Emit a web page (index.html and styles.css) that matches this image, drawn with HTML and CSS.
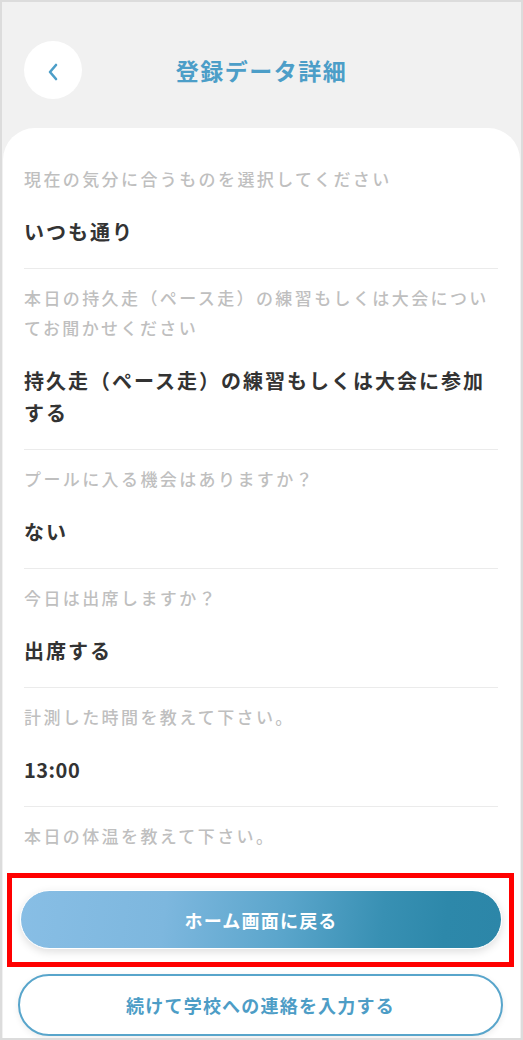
FILE: index.html
```html
<!DOCTYPE html>
<html lang="ja">
<head>
<meta charset="utf-8">
<title>登録データ詳細</title>
<link rel="stylesheet" href="styles.css">
</head>
<body>
<div class="screen">
  <header class="header">
    <button class="back" aria-label="戻る">
      <svg width="12" height="18" viewBox="0 0 12 18"><path d="M9 2 L3 9 L9 16" fill="none" stroke="#4c9ec8" stroke-width="2.6" stroke-linecap="round" stroke-linejoin="round"/></svg>
    </button>
    <h1 class="title">登録データ詳細</h1>
    <span class="spacer"></span>
  </header>
  <main class="card">
    <div class="list">
      <div class="item">
        <div class="label">現在の気分に合うものを選択してください</div>
        <div class="value">いつも通り</div>
      </div>
      <div class="item">
        <div class="label">本日の持久走（ペース走）の練習もしくは大会についてお聞かせください</div>
        <div class="value">持久走（ペース走）の練習もしくは大会に参加する</div>
      </div>
      <div class="item">
        <div class="label">プールに入る機会はありますか？</div>
        <div class="value">ない</div>
      </div>
      <div class="item">
        <div class="label">今日は出席しますか？</div>
        <div class="value">出席する</div>
      </div>
      <div class="item">
        <div class="label">計測した時間を教えて下さい。</div>
        <div class="value value-num">13:00</div>
      </div>
      <div class="item last">
        <div class="label">本日の体温を教えて下さい。</div>
      </div>
    </div>
    <div class="footer">
      <div class="highlight">
        <button class="btn-primary">ホーム画面に戻る</button>
      </div>
      <button class="btn-secondary">続けて学校への連絡を入力する</button>
    </div>
  </main>
</div>
</body>
</html>
```
FILE: styles.css
```css
html, body {
  margin: 0;
  padding: 0;
  background: #ffffff;
}

body {
  font-family: "Noto Sans CJK JP", "Noto Sans", sans-serif;
}

.screen {
  width: 523px;
  height: 1040px;
  box-sizing: border-box;
  border: 2px solid #dcdcdc;
  background: #f1f1f1;
  display: flex;
  flex-direction: column;
  overflow: hidden;
}

.header {
  display: grid;
  grid-template-columns: 58px 1fr 58px;
  align-items: center;
  padding: 39px 22px 29px;
}

.back {
  width: 58px;
  height: 58px;
  border-radius: 50%;
  border: none;
  background: #ffffff;
  padding: 4px 0 0;
  display: flex;
  align-items: center;
  justify-content: center;
}

.title {
  margin: 0;
  text-align: center;
  font-size: 23px;
  font-weight: 700;
  letter-spacing: 1.5px;
  color: #4c9ec8;
  line-height: 30px;
}

.card {
  flex: 1;
  margin: 0 1px;
  background: #ffffff;
  border-radius: 32px 32px 0 0;
  padding-top: 22px;
  display: flex;
  flex-direction: column;
  overflow: hidden;
}

.list {
  padding: 0 22px 0 21px;
}

.item {
  padding: 14px 0 20px;
  border-bottom: 1px solid #ebebeb;
}

.item.last {
  border-bottom: none;
  padding-bottom: 0;
}

.label {
  font-size: 17px;
  font-weight: 500;
  line-height: 30px;
  letter-spacing: 2.4px;
  color: #bfbfbf;
}

.value {
  margin-top: 22px;
  font-size: 20px;
  line-height: 32px;
  letter-spacing: 2px;
  font-weight: 700;
  color: #333333;
}

.value-num {
  letter-spacing: 0.5px;
}

.footer {
  display: flex;
  flex-direction: column;
  padding-top: 22px;
}

.highlight {
  margin: 0 6px 0 4px;
  border: 5px solid #ff0000;
  padding: 12px 7px 13px 8px;
}

.btn-primary,
.btn-secondary {
  font-family: "Noto Sans CJK JP", "Noto Sans", sans-serif;
  font-size: 18px;
  font-weight: 700;
  letter-spacing: 1.2px;
  box-sizing: border-box;
  display: block;
  width: 100%;
}

.btn-primary {
  height: 59px;
  border-radius: 30px;
  border: 1.5px solid #ffffff;
  color: #ffffff;
  background: linear-gradient(97deg, #88bee5 0%, #7db7de 30%, #5aa5cb 55%, #3890b3 75%, #2d88aa 88%, #2c86a8 100%);
  box-shadow: 0 3px 8px rgba(0, 0, 0, 0.13);
}

.btn-secondary {
  margin: 7px 17px 0 15px;
  width: auto;
  height: 62px;
  border-radius: 31px;
  border: 2.5px solid #58a5cb;
  background: #ffffff;
  color: #4d9dc6;
  box-shadow: 0 2px 6px rgba(0, 0, 0, 0.08);
}
```
